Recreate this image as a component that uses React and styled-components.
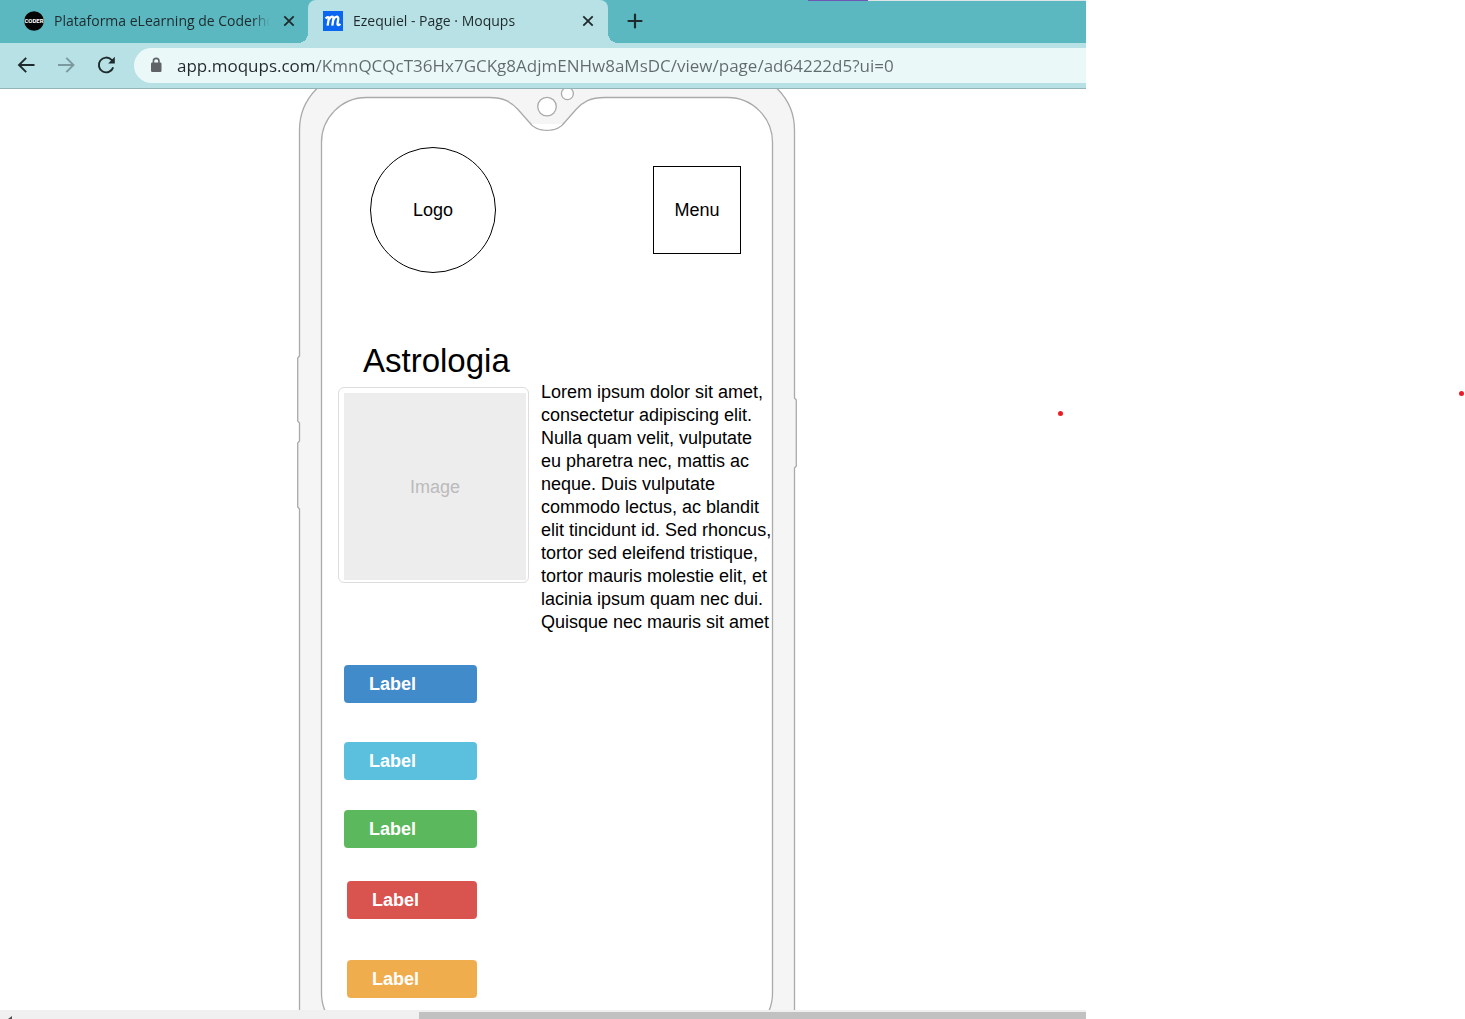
import React from "react";
import styled, { createGlobalStyle } from "styled-components";

const colors = {
  strip: "#5bb8c1",
  toolbar: "#b7e1e5",
  field: "#ebf8f8",
  ink: "#1f2a2c",
  muted: "#5f6b6d",
};

const GlobalStyle = createGlobalStyle`
  *, *::before, *::after { box-sizing: border-box; }
  body {
    margin: 0;
    background: #fff;
    color: #000;
    font-family: "Liberation Sans", Arial, sans-serif;
    font-size: 18px;
  }
  button, input { font: inherit; }
`;

const Page = styled.div`
  position: relative;
  display: grid;
  grid-template-columns: minmax(0, 1fr) 379px;
  height: 100vh;
  overflow: hidden;
`;

const Browser = styled.div`
  display: flex;
  flex-direction: column;
  min-width: 0;
  min-height: 0;
`;

const TabStrip = styled.nav`
  position: relative;
  display: flex;
  height: 43px;
  background: ${colors.strip};
  font-family: "Open Sans", "Noto Sans", sans-serif;
  font-size: 14px;
`;

const TopEdge = styled.span`
  position: absolute;
  top: 0;
  right: 0;
  width: 278px;
  height: 1px;
  background: linear-gradient(90deg, #6f55b5 60px, #dfe5e6 60px);
`;

const Tab = styled.div`
  position: relative;
  display: flex;
  align-items: center;
  gap: 10px;
  width: ${(p) => (p.$active ? 300 : 308)}px;
  padding: 0 10px 2px ${(p) => (p.$active ? 15 : 24)}px;
  border-radius: 8px 8px 0 0;
  background: ${(p) => (p.$active ? colors.toolbar : "transparent")};

  &::before,
  &::after {
    content: "";
    display: ${(p) => (p.$active ? "block" : "none")};
    position: absolute;
    bottom: 0;
    width: 10px;
    height: 10px;
  }
  &::before {
    left: -10px;
    background: radial-gradient(circle at 0 0, transparent 10px, ${colors.toolbar} 10px);
  }
  &::after {
    right: -10px;
    background: radial-gradient(circle at 100% 0, transparent 10px, ${colors.toolbar} 10px);
  }
`;

const TabTitle = styled.a`
  flex: 1;
  min-width: 0;
  overflow: hidden;
  white-space: nowrap;
  line-height: 20px;
  color: ${colors.ink};
  text-decoration: none;
  mask-image: linear-gradient(90deg, #000 calc(100% - 18px), transparent);
`;

const IconButton = styled.button`
  display: grid;
  place-items: center;
  flex: none;
  width: ${(p) => p.$size}px;
  height: ${(p) => p.$size}px;
  padding: 0;
  border: 0;
  background: none;
  color: ${(p) => (p.disabled ? "#7b9a9d" : colors.ink)};
`;

const NewTab = styled.div`
  display: flex;
  align-items: center;
  padding: 0 0 2px 15px;
`;

const Toolbar = styled.header`
  display: flex;
  align-items: center;
  gap: 16px;
  height: 46px;
  padding: 0 0 1px 14px;
  background: ${colors.toolbar};
  border-bottom: 1px solid #93b3b7;
`;

const AddressBar = styled.label`
  display: flex;
  align-items: center;
  gap: 15px;
  flex: 1;
  min-width: 0;
  height: 35px;
  padding-left: 16px;
  border-radius: 18px 0 0 18px;
  background: ${colors.field};
`;

const AddressInput = styled.input`
  flex: 1;
  min-width: 0;
  padding: 2px 0 0;
  border: 0;
  outline: 0;
  font-family: "Open Sans", "Noto Sans", sans-serif;
  font-size: 17px;
  line-height: 24px;
  color: transparent;
  background: linear-gradient(90deg, ${colors.ink} 138px, ${colors.muted} 138px);
  background-clip: text;
`;

const Canvas = styled.main`
  display: flex;
  flex: 1;
  justify-content: center;
  align-items: flex-start;
  min-height: 0;
  padding-left: 8px;
  overflow: hidden;
`;

const Phone = styled.div`
  position: relative;
  flex: none;
  width: 500px;
`;

const PhoneFrame = styled.svg`
  position: absolute;
  top: 0;
  left: 0;
`;

const Screen = styled.div`
  position: relative;
  padding: 58px 24px 12px 41px;
`;

const ScreenHeader = styled.header`
  display: flex;
  align-items: center;
  justify-content: space-between;
  padding: 0 32px;
`;

const Logo = styled.div`
  display: grid;
  place-items: center;
  width: 126px;
  height: 126px;
  border: 1px solid #000;
  border-radius: 50%;
`;

const MenuButton = styled.button`
  width: 88px;
  height: 88px;
  padding: 0;
  border: 1px solid #000;
  background: none;
  color: #000;
`;

const Title = styled.h1`
  margin: 68px 0 0 25px;
  font-size: 33px;
  font-weight: 400;
  line-height: 40px;
`;

const Article = styled.section`
  display: flex;
  align-items: flex-start;
  gap: 12px;
`;

const Picture = styled.div`
  flex: none;
  width: 191px;
  height: 196px;
  margin-top: 6px;
  padding: 5px 2px 2px 5px;
  border: 1px solid #ddd;
  border-radius: 6px;
`;

const PictureFill = styled.div`
  display: grid;
  place-items: center;
  height: 100%;
  padding-top: 2px;
  background: #ededed;
  color: #bbb;
`;

const Paragraph = styled.p`
  flex: 1;
  margin: 0;
  line-height: 23px;
`;

const Labels = styled.div`
  display: flex;
  flex-direction: column;
  align-items: flex-end;
  width: 133px;
  margin: 31px 0 0 6px;
`;

const LabelButton = styled.button`
  width: ${(p) => p.$width}px;
  height: 38px;
  margin-bottom: ${(p) => p.$after}px;
  padding: 0 25px;
  border: 0;
  border-radius: 4px;
  background: ${(p) => p.$color};
  color: #fff;
  font-weight: 700;
  text-align: left;
`;

const Scrollbar = styled.div`
  display: flex;
  align-items: flex-end;
  justify-content: space-between;
  flex: none;
  height: 9px;
  padding-left: 8px;
  background: #f0f0f0;
`;

const Thumb = styled.div`
  width: 667px;
  height: 7px;
  background: #c1c1c1;
`;

const Dot = styled.span`
  position: absolute;
  top: ${(p) => p.$top}px;
  right: ${(p) => p.$right}px;
  width: 5px;
  height: 5px;
  border-radius: 50%;
  background: #ed1c24;
`;

const labels = [
  { color: "#428bca", width: 133, after: 39 },
  { color: "#5bc0de", width: 133, after: 30 },
  { color: "#5cb85c", width: 133, after: 33 },
  { color: "#d9534f", width: 130, after: 41 },
  { color: "#f0ad4e", width: 130, after: 0 },
];

const CloseIcon = () => (
  <svg width="12" height="12" viewBox="0 0 12 12" fill="none" stroke="currentColor" strokeWidth="1.8">
    <path d="M1.3 1.3l9.4 9.4M10.7 1.3l-9.4 9.4" />
  </svg>
);

const PlusIcon = () => (
  <svg width="16" height="16" viewBox="0 0 16 16" fill="none" stroke="currentColor" strokeWidth="2.2" strokeLinecap="round">
    <path d="M8 1.5v13M1.5 8h13" />
  </svg>
);

const ArrowIcon = ({ flip }) => (
  <svg width="18" height="18" viewBox="0 0 18 18" fill="none" stroke="currentColor" strokeWidth="1.9">
    <path d={flip ? "M1 9h15.5M9.3 1.8L16.5 9l-7.2 7.2" : "M17.5 9H2M9.2 1.8L2 9l7.2 7.2"} />
  </svg>
);

const ReloadIcon = () => (
  <svg width="20" height="20" viewBox="0 0 20 20">
    <path d="M17.2 12.4A7.4 7.4 0 1 1 15.6 4.9L17 6.4" fill="none" stroke="currentColor" strokeWidth="1.9" />
    <path d="M18.8 1.8v6.6h-6.6z" fill="currentColor" />
  </svg>
);

const LockIcon = () => (
  <svg width="12" height="16" viewBox="0 0 12 16">
    <rect x="1" y="5.5" width="10.5" height="9.5" rx="1.2" fill="#5f6368" />
    <path d="M3.4 6V4.2a2.8 2.8 0 0 1 5.6 0V6" fill="none" stroke="#5f6368" strokeWidth="1.6" />
  </svg>
);

const CoderIcon = () => (
  <svg width="20" height="20" viewBox="0 0 20 20">
    <circle cx="10" cy="10" r="9.8" fill="#050505" />
    <text x="10" y="12" textAnchor="middle" fontFamily="Roboto, sans-serif" fontSize="6" fontWeight="700" fill="#fff">
      CODER
    </text>
  </svg>
);

const MoqupsIcon = () => (
  <svg width="20" height="20" viewBox="0 0 20 20">
    <rect width="20" height="20" fill="#0a66f0" />
    <path
      d="M2.6 7.4C4 5.8 6 5.4 5.8 7.4L4.6 14.6M5.8 8.6C7.8 4.8 10.8 4.8 10.4 7.8L9.3 14.6M10.4 8.6C12.4 4.8 15.8 4.8 15.2 8.2L14.5 12.6C14.3 14.6 16 14.4 17.4 13"
      fill="none"
      stroke="#fff"
      strokeWidth="2.3"
    />
  </svg>
);

const Frame = () => (
  <PhoneFrame width="500" height="921" viewBox="0 0 500 921" aria-hidden="true" stroke="#aaa" strokeWidth="1.3">
    <path
      d="M2.5 970V420L.7 418V354L2.5 352V334L.7 332V269L2.5 267V41A58 58 0 0 1 60.5 -17H439.5A58 58 0 0 1 497.5 41V309L499.3 311V377L497.5 379V970Z"
      fill="#f5f5f5"
    />
    <path
      d="M24.5 904V54A45 45 0 0 1 69.5 8.5H192C207 8.5 214 13 221 20.5L232 33C236 38.5 242 41.3 250 41.3S264 38.5 268 33L279 20.5C286 13 293 8.5 308 8.5H430.5A45 45 0 0 1 475.5 54V904A45 45 0 0 1 430.5 949H69.5A45 45 0 0 1 24.5 904Z"
      fill="#fff"
    />
    <path d="M234.8 35C238.5 39 243.5 40.6 250 40.6S261.5 39 265.2 35Z" fill="#fff" stroke="none" />
    <circle cx="250" cy="17.6" r="9.3" fill="#fff" />
    <circle cx="270.4" cy="4.6" r="6" fill="#fff" />
  </PhoneFrame>
);

export default function App() {
  return (
    <>
      <GlobalStyle />
      <Page>
        <Browser>
          <TabStrip>
            <TopEdge />
            <Tab>
              <CoderIcon />
              <TabTitle href="#coder">Plataforma eLearning de Coderhouse</TabTitle>
              <IconButton $size={18} aria-label="Close tab"><CloseIcon /></IconButton>
            </Tab>
            <Tab $active>
              <MoqupsIcon />
              <TabTitle href="#moqups">Ezequiel - Page · Moqups</TabTitle>
              <IconButton $size={20} aria-label="Close tab"><CloseIcon /></IconButton>
            </Tab>
            <NewTab>
              <IconButton $size={24} aria-label="New tab"><PlusIcon /></IconButton>
            </NewTab>
          </TabStrip>
          <Toolbar>
            <IconButton $size={24} aria-label="Back"><ArrowIcon /></IconButton>
            <IconButton $size={24} aria-label="Forward" disabled><ArrowIcon flip /></IconButton>
            <IconButton $size={24} aria-label="Reload"><ReloadIcon /></IconButton>
            <AddressBar>
              <LockIcon />
              <AddressInput
                aria-label="Address"
                defaultValue="app.moqups.com/KmnQCQcT36Hx7GCKg8AdjmENHw8aMsDC/view/page/ad64222d5?ui=0"
              />
            </AddressBar>
          </Toolbar>
          <Canvas>
            <Phone>
              <Frame />
              <Screen>
                <ScreenHeader>
                  <Logo>Logo</Logo>
                  <MenuButton>Menu</MenuButton>
                </ScreenHeader>
                <Title>Astrologia</Title>
                <Article>
                  <Picture>
                    <PictureFill>Image</PictureFill>
                  </Picture>
                  <Paragraph>
                    Lorem ipsum dolor sit amet, consectetur adipiscing elit. Nulla quam velit,
                    vulputate eu pharetra nec, mattis ac neque. Duis vulputate commodo lectus, ac
                    blandit elit tincidunt id. Sed rhoncus, tortor sed eleifend tristique, tortor
                    mauris molestie elit, et lacinia ipsum quam nec dui. Quisque nec mauris sit amet
                  </Paragraph>
                </Article>
                <Labels>
                  {labels.map((l) => (
                    <LabelButton key={l.color} $color={l.color} $width={l.width} $after={l.after}>
                      Label
                    </LabelButton>
                  ))}
                </Labels>
              </Screen>
            </Phone>
          </Canvas>
          <Scrollbar>
            <svg width="4" height="3" viewBox="0 0 4 3" aria-hidden="true">
              <path d="M4 0v3H0z" fill="#505050" />
            </svg>
            <Thumb />
          </Scrollbar>
        </Browser>
        <Dot $top={411} $right={402} />
        <Dot $top={391} $right={1} />
      </Page>
    </>
  );
}
